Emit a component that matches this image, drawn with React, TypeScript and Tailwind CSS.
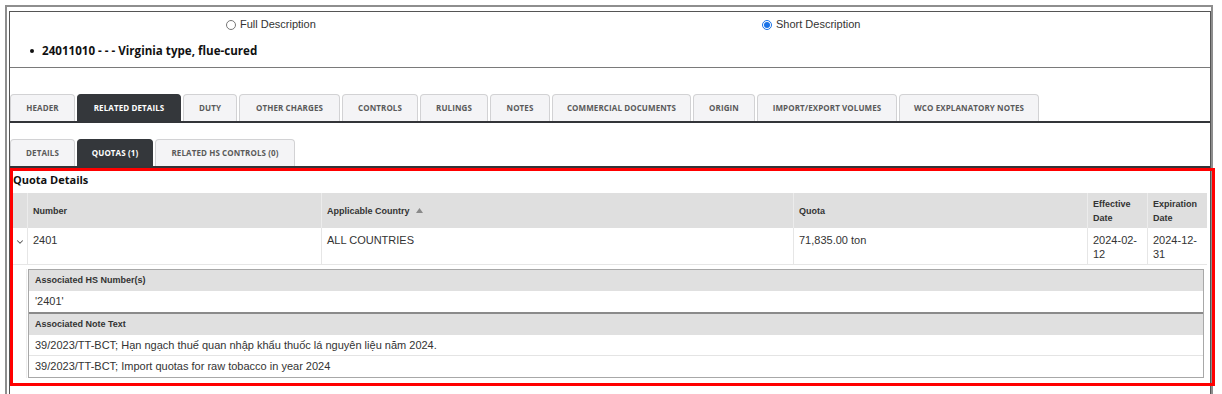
import { ChevronDown } from "lucide-react";

const mainTabs = [
  { label: "HEADER", w: "w-[65px]" },
  { label: "RELATED DETAILS", w: "w-[104px]", active: true },
  { label: "DUTY", w: "w-[54px]" },
  { label: "OTHER CHARGES", w: "w-[101px]" },
  { label: "CONTROLS", w: "w-[76px]" },
  { label: "RULINGS", w: "w-[68px]" },
  { label: "NOTES", w: "w-[60px]" },
  { label: "COMMERCIAL DOCUMENTS", w: "w-[139px]" },
  { label: "ORIGIN", w: "w-[62px]" },
  { label: "IMPORT/EXPORT VOLUMES", w: "w-[140px]" },
  { label: "WCO EXPLANATORY NOTES", w: "w-[140px]" },
];

const subTabs = [
  { label: "DETAILS", w: "w-[65px]" },
  { label: "QUOTAS (1)", w: "w-[76px]", active: true },
  { label: "RELATED HS CONTROLS (0)", w: "w-[140px]" },
];

type Tab = { label: string; w: string; active?: boolean };

function TabRow({ tabs }: { tabs: Tab[] }) {
  return (
    <div className="flex gap-[2px] border-b-2 border-[#333539]">
      {tabs.map(t => (
        <div key={t.label}
          className={`${t.w} h-[27px] flex items-center justify-center rounded-t-[4px] border border-b-0 text-[8px] font-bold tracking-[0.1px] whitespace-nowrap ${
            t.active ? "bg-[#34373b] border-[#34373b] text-white" : "bg-[#f4f4f6] border-[#d2d2d4] text-[#5a5a5a]"}`}
          style={{ fontFamily: "'Open Sans', sans-serif" }}>
          {t.label}
        </div>
      ))}
    </div>
  );
}

const cols = "grid grid-cols-[14px_294px_472px_294px_60px_60px]";

export default function App() {
  return (
    <div className="w-[1222px] h-[394px] bg-white overflow-hidden" style={{ fontFamily: "'Liberation Sans', Arial, sans-serif" }}>
      <div className="ml-[5px] mt-[5px] w-[1208px] h-[392px] border-2 border-[#8e8e8e] pl-[2px] pt-[4px]">
        <div className="h-full border border-[#555] border-b-0">
          {/* description box */}
          <div className="h-[56px] border-b border-[#7a7a7a]">
            <div className="flex items-center h-[24px] pt-[1px] text-[11px] text-[#333]">
              <div className="ml-[216px] w-[536px] flex items-center gap-[4px]">
                <span className="w-[10px] h-[10px] rounded-full border border-[#767676] bg-white" />
                <span>Full Description</span>
              </div>
              <div className="flex items-center gap-[4px]">
                <span className="w-[10px] h-[10px] rounded-full border border-[#1a73e8] bg-white flex items-center justify-center">
                  <span className="w-[6px] h-[6px] rounded-full bg-[#1a73e8]" />
                </span>
                <span>Short Description</span>
              </div>
            </div>
            <ul className="mt-[6px] ml-[20px] flex items-center gap-[8px] text-[11.6px] font-bold text-[#111]" style={{ fontFamily: "'Open Sans', sans-serif" }}>
              <span className="w-[4px] h-[4px] rounded-full bg-[#111]" />
              <li>24011010 - - - Virginia type, flue-cured</li>
            </ul>
          </div>

          <div className="h-[26px]" />
          <TabRow tabs={mainTabs} />
          <div className="h-[16px]" />
          <TabRow tabs={subTabs} />

          {/* quota details (highlighted) */}
          <div className="mr-[-5px] border-[3px] border-[#ff0000] pr-[5px]">
            <div className="h-[22px] pb-[3px] flex items-center text-[11px] font-bold text-[#111]" style={{ fontFamily: "'Open Sans', sans-serif" }}>
              Quota Details
            </div>

            <div className={`${cols} bg-[#dfdfdf] h-[35px] text-[9px] font-bold text-[#333] leading-[14px]`}>
              <div />
              <div className="border-l border-[#ececec] pl-[5px] flex items-center">Number</div>
              <div className="border-l border-[#ececec] pl-[5px] flex items-center gap-[6px]">
                Applicable Country
                <svg width="7" height="5" viewBox="0 0 7 5"><path d="M0 5 L3.5 0 L7 5 Z" fill="#8a8a8a" /></svg>
              </div>
              <div className="border-l border-[#ececec] pl-[5px] flex items-center">Quota</div>
              <div className="border-l border-[#ececec] pl-[5px] flex items-center">Effective Date</div>
              <div className="border-l border-[#ececec] pl-[5px] flex items-center">Expiration Date</div>
            </div>

            <div className={`${cols} h-[37px] text-[11px] text-[#333] leading-[14px] border-b border-[#e6e6e6]`}>
              <div className="flex justify-center pt-[9px]">
                <ChevronDown size={10} strokeWidth={2.5} color="#555" />
              </div>
              <div className="border-l border-[#e6e6e6] pl-[5px] pt-[5px]">2401</div>
              <div className="border-l border-[#e6e6e6] pl-[5px] pt-[5px]">ALL COUNTRIES</div>
              <div className="border-l border-[#e6e6e6] pl-[5px] pt-[5px]">71,835.00 ton</div>
              <div className="border-l border-[#e6e6e6] pl-[5px] pt-[5px]">2024-02-<br />12</div>
              <div className="border-l border-[#e6e6e6] pl-[5px] pt-[5px]">2024-12-<br />31</div>
            </div>

            <div className="flex pt-[4px] pb-[5px]">
              <div className="w-[14px] border-r border-[#eeeeee]" />
              <div className="ml-[1px] mr-[3px] flex-1 border border-[#a8a8a8] text-[11px] text-[#333]">
                <div className="h-[21px] bg-[#e0e0e0] pl-[6px] flex items-center text-[9px] font-bold">Associated HS Number(s)</div>
                <div className="h-[21px] pl-[6px] flex items-center">'2401'</div>
                <div className="h-[2px] bg-[#8a8a8a]" />
                <div className="h-[21px] bg-[#e0e0e0] pl-[6px] flex items-center text-[9px] font-bold">Associated Note Text</div>
                <div className="h-[21px] pl-[6px] flex items-center border-b border-[#e4e4e4]">39/2023/TT-BCT; Hạn ngạch thuế quan nhập khẩu thuốc lá nguyên liệu năm 2024.</div>
                <div className="h-[21px] pl-[6px] flex items-center">39/2023/TT-BCT; Import quotas for raw tobacco in year 2024</div>
              </div>
            </div>
          </div>
        </div>
      </div>
    </div>
  );
}
